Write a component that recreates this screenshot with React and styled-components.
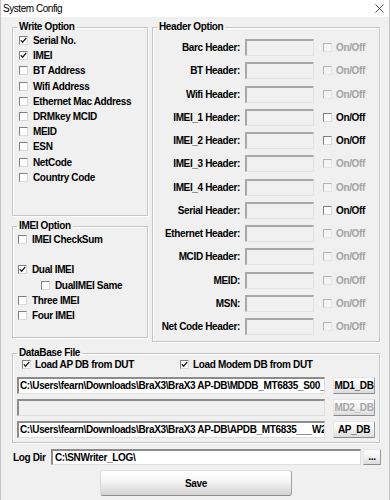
import React from "react";
import styled, { createGlobalStyle, css } from "styled-components";

const FONT = `"Liberation Sans", Arial, sans-serif`;

const GlobalStyle = createGlobalStyle`
  html, body { margin: 0; padding: 0; background: #f0f0f0; }
  body { font-family: ${FONT}; font-size: 10px; letter-spacing: -0.35px; color: #000; }
  * { box-sizing: border-box; }
`;

const Window = styled.div`
  width: 390px;
  height: 500px;
  background: #f0f0f0;
  border-left: 1px solid #c4c4c4;
  border-right: 1px solid #c4c4c4;
  overflow: hidden;
`;

const TitleBar = styled.div`
  height: 17px;
  background: #fff;
  display: flex;
  align-items: center;
  justify-content: space-between;
  padding: 0 5px 0 2px;
  font-size: 10px;
  letter-spacing: -0.45px;
  font-weight: 400;
`;

const Body = styled.div`
  padding: 4px 9px 0 11px;
  display: flex;
  flex-direction: column;
`;

const TopGrid = styled.div`
  display: grid;
  grid-template-columns: 136px 228px;
  column-gap: 4px;
  align-items: start;
`;

const LeftCol = styled.div`
  display: flex;
  flex-direction: column;
  gap: 4px;
`;

const Group = styled.fieldset`
  margin: 0;
  padding: 0;
  border: 1px solid #c6c6c6;
  box-shadow: inset 1px 1px 0 #fff, 1px 1px 0 #fff;
  height: ${(p) => p.$h}px;
  display: flex;
  flex-direction: column;
  min-width: 0;
`;

const Legend = styled.legend`
  margin-left: 4px;
  padding: 0 2px;
  font-weight: 700;
  font-size: 10px;
  line-height: 12px;
`;

const OptionList = styled.div`
  display: flex;
  flex-direction: column;
  padding-left: ${(p) => p.$pl ?? 6}px;
`;

const OptionRow = styled.div`
  height: 15.2px;
  display: flex;
  align-items: center;
  gap: 5px;
  font-weight: 700;
  padding-left: ${(p) => p.$indent || 0}px;
  white-space: nowrap;
`;

const Box = styled.span`
  width: 9px;
  height: 9px;
  flex: none;
  display: inline-flex;
  align-items: center;
  justify-content: center;
  background: #fff;
  border-style: solid;
  border-width: 1px;
  border-color: #808080 #d8d8d8 #d8d8d8 #808080;
  ${(p) =>
    p.$disabled &&
    css`
      background: #f4f4f4;
      border-color: #b4b4b4 #e6e6e6 #e6e6e6 #b4b4b4;
    `}
`;

function Check({ checked, disabled }) {
  return (
    <Box $disabled={disabled}>
      {checked && (
        <svg width="7" height="7" viewBox="0 0 7 7">
          <polyline points="0.8,3.2 2.6,5.2 6.2,1" fill="none" stroke="#222" strokeWidth="1.3" />
        </svg>
      )}
    </Box>
  );
}

const HeaderList = styled.div`
  display: flex;
  flex-direction: column;
  padding-top: 3px;
`;

const HeaderRow = styled.div`
  height: 23.25px;
  display: grid;
  grid-template-columns: 87px 69px auto;
  column-gap: 5px;
  align-items: center;
`;

const HeaderLabel = styled.span`
  text-align: right;
  font-weight: 700;
  white-space: nowrap;
`;

const HeaderInput = styled.div`
  height: 17px;
  background: #f0f0f0;
  border-style: solid;
  border-width: 2px 1px 1px 2px;
  border-color: #a8a8a8 #e3e3e3 #e3e3e3 #a8a8a8;
`;

const Toggle = styled.span`
  display: flex;
  align-items: center;
  gap: 4px;
  padding-left: 4px;
  font-weight: 700;
  color: ${(p) => (p.$disabled ? "#a3a3a3" : "#000")};
`;

const DbGroup = styled(Group)`
  margin-top: 5px;
`;

const DbChecks = styled.div`
  display: grid;
  grid-template-columns: 158px auto;
  padding-left: 9px;
  height: 10px;
  align-items: center;
`;

const DbCheck = styled.span`
  display: flex;
  align-items: center;
  gap: 4px;
  font-weight: 700;
  white-space: nowrap;
`;

const DbPaths = styled.div`
  display: flex;
  flex-direction: column;
  gap: 5px;
  padding: 8px 0 0 4px;
`;

const PathRow = styled.div`
  display: flex;
  align-items: center;
  gap: 8px;
`;

const PathField = styled.div`
  width: ${(p) => p.$w}px;
  height: 17px;
  flex: none;
  background: ${(p) => (p.$disabled ? "#f0f0f0" : "#fff")};
  border-style: solid;
  border-width: 2px 1px 1px 2px;
  border-color: #8c8c8c #dedede #dedede #8c8c8c;
  padding: 0 0 0 1px;
  font-weight: 700;
  line-height: 14px;
  white-space: nowrap;
  overflow: hidden;
  text-overflow: clip;
`;

const SmallButton = styled.button`
  width: ${(p) => p.$w || 42}px;
  height: ${(p) => p.$hgt || 17}px;
  margin-left: ${(p) => p.$ml || 0}px;
  flex: none;
  padding: 0;
  font-family: ${FONT};
  font-size: 10px;
  letter-spacing: -0.35px;
  font-weight: 700;
  color: ${(p) => (p.disabled ? "#a6a6a6" : "#000")};
  background: linear-gradient(#ffffff, #f3f3f3 45%, #dcdcdc);
  border: 1px solid;
  border-color: #e6e6e6 #9a9a9a #8a8a8a #e6e6e6;
  border-radius: 1px;
  line-height: 14px;
`;

const LogRow = styled.div`
  display: flex;
  align-items: center;
  margin-top: 6px;
  height: 16px;
`;

const LogLabel = styled.span`
  width: 39px;
  flex: none;
  font-weight: 700;
  padding-left: 1px;
  white-space: nowrap;
`;

const LogField = styled(PathField)`
  height: 16px;
  line-height: 13px;
  padding-left: 2px;
`;

const SaveRow = styled.div`
  display: flex;
  justify-content: center;
  margin-top: 5px;
`;

const SaveButton = styled.button`
  width: 192px;
  height: 26px;
  font-family: ${FONT};
  font-size: 10px;
  letter-spacing: -0.35px;
  font-weight: 700;
  background: linear-gradient(#ffffff, #f6f6f6 40%, #d2d2d2);
  border: 1px solid;
  border-color: #e2e2e2 #a0a0a0 #909090 #dadada;
  border-radius: 3px;
  padding: 0;
`;

const writeOptions = [
  ["Serial No.", true],
  ["IMEI", true],
  ["BT Address", false],
  ["Wifi Address", false],
  ["Ethernet Mac Address", false],
  ["DRMkey MCID", false],
  ["MEID", false],
  ["ESN", false],
  ["NetCode", false],
  ["Country Code", false],
];

const headers = [
  ["Barc Header:", false],
  ["BT Header:", false],
  ["Wifi Header:", false],
  ["IMEI_1 Header:", true],
  ["IMEI_2 Header:", true],
  ["IMEI_3 Header:", false],
  ["IMEI_4 Header:", false],
  ["Serial Header:", true],
  ["Ethernet Header:", false],
  ["MCID Header:", false],
  ["MEID:", false],
  ["MSN:", false],
  ["Net Code Header:", false],
];

export default function App() {
  return (
    <>
      <GlobalStyle />
      <Window>
        <TitleBar>
          <span>System Config</span>
          <svg width="9" height="9" viewBox="0 0 9 9">
            <path d="M0.5 0.5 L8.5 8.5 M8.5 0.5 L0.5 8.5" stroke="#333" strokeWidth="0.9" />
          </svg>
        </TitleBar>
        <Body>
          <TopGrid>
            <LeftCol>
              <Group $h={195}>
                <Legend>Write Option</Legend>
                <OptionList $pl={6}>
                  {writeOptions.map(([label, on]) => (
                    <OptionRow key={label}>
                      <Check checked={on} />
                      {label}
                    </OptionRow>
                  ))}
                </OptionList>
              </Group>
              <Group $h={118}>
                <Legend>IMEI Option</Legend>
                <OptionList $pl={5}>
                  <OptionRow>
                    <Check />
                    IMEI CheckSum
                  </OptionRow>
                  <OptionRow />
                  <OptionRow>
                    <Check checked />
                    Dual IMEI
                  </OptionRow>
                  <OptionRow $indent={23}>
                    <Check />
                    DualIMEI Same
                  </OptionRow>
                  <OptionRow>
                    <Check />
                    Three IMEI
                  </OptionRow>
                  <OptionRow>
                    <Check />
                    Four IMEI
                  </OptionRow>
                </OptionList>
              </Group>
            </LeftCol>
            <Group $h={321}>
              <Legend>Header Option</Legend>
              <HeaderList>
                {headers.map(([label, on]) => (
                  <HeaderRow key={label}>
                    <HeaderLabel>{label}</HeaderLabel>
                    <HeaderInput />
                    <Toggle $disabled={!on}>
                      <Check disabled={!on} />
                      On/Off
                    </Toggle>
                  </HeaderRow>
                ))}
              </HeaderList>
            </Group>
          </TopGrid>
          <DbGroup $h={96}>
            <Legend>DataBase File</Legend>
            <DbChecks>
              <DbCheck>
                <Check checked />
                Load AP DB from DUT
              </DbCheck>
              <DbCheck>
                <Check checked />
                Load Modem DB from DUT
              </DbCheck>
            </DbChecks>
            <DbPaths>
              <PathRow>
                <PathField $w={308}>C:\Users\fearn\Downloads\BraX3\BraX3 AP-DB\MDDB_MT6835_S00_</PathField>
                <SmallButton>MD1_DB</SmallButton>
              </PathRow>
              <PathRow>
                <PathField $w={308} $disabled />
                <SmallButton disabled>MD2_DB</SmallButton>
              </PathRow>
              <PathRow>
                <PathField $w={308}>C:\Users\fearn\Downloads\BraX3\BraX3 AP-DB\APDB_MT6835___W2</PathField>
                <SmallButton>AP_DB</SmallButton>
              </PathRow>
            </DbPaths>
          </DbGroup>
          <LogRow>
            <LogLabel>Log Dir</LogLabel>
            <LogField $w={310}>C:\SNWriter_LOG\</LogField>
            <SmallButton $w={18} $hgt={16} $ml={2}>...</SmallButton>
          </LogRow>
          <SaveRow>
            <SaveButton>Save</SaveButton>
          </SaveRow>
        </Body>
      </Window>
    </>
  );
}
